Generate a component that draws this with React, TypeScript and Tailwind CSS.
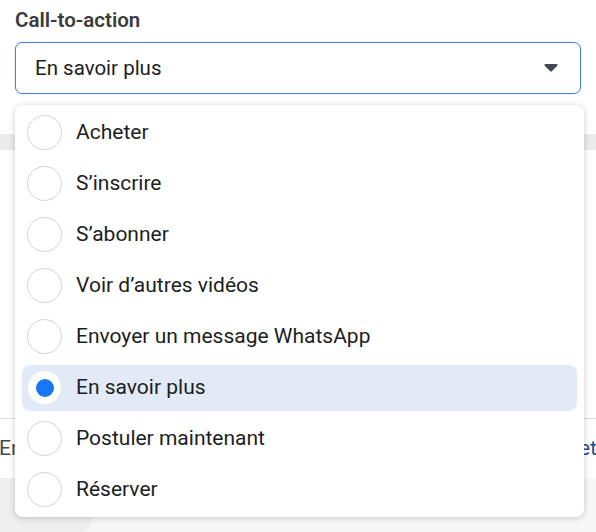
import React from 'react';

const OPTIONS = [
  'Acheter',
  'S’inscrire',
  'S’abonner',
  'Voir d’autres vidéos',
  'Envoyer un message WhatsApp',
  'En savoir plus',
  'Postuler maintenant',
  'Réserver',
];

const SELECTED = 'En savoir plus';

const Caret: React.FC = () => (
  <svg width="16" height="10" viewBox="0 0 16 10" aria-hidden="true">
    <path d="M2.5 2 H13.5 L8 7.5 Z" fill="#444950" stroke="#444950" strokeWidth="2.2" strokeLinejoin="round" />
  </svg>
);

const App: React.FC = () => {
  return (
    <div
      className="relative h-[532px] w-[596px] overflow-hidden bg-white"
      style={{ fontFamily: 'Roboto, "Liberation Sans", sans-serif' }}
    >
      {/* page behind the menu */}
      <div className="flex h-full flex-col">
        <div className="px-[15px] pt-[7px]">
          <p className="text-[20.5px] font-semibold leading-[26px] text-[#3a3b3c]">Call-to-action</p>
          <div className="mt-[9px] flex h-[52px] items-center justify-between rounded-[7px] border border-[#4a7fd0] bg-white pl-[19px] pr-[21px] shadow-[0_0_0_1px_rgba(24,119,242,0.08)]">
            <span className="text-[20.5px] text-[#1c1e21]">{SELECTED}</span>
            <Caret />
          </div>
        </div>
        <div className="h-[40px] shrink-0" />
        <div className="h-[16px] shrink-0 bg-[#ebebeb]" />
        <div className="h-[268px] shrink-0" />
        <div className="flex h-[60px] shrink-0 items-center justify-between border-t border-[#dcdcdc] text-[21px]">
          <span className="-ml-[1px] text-[#444950]">En</span>
          <span className="-mr-[1px] text-[#2d4c8a]">Modifier le projet</span>
        </div>
        <div className="flex flex-1 bg-[#f7f7f7]">
          <div className="w-[92px] rounded-br-[14px] bg-[#eeeeee]" />
        </div>
      </div>

      {/* open menu */}
      <div className="absolute left-[15px] top-[105px] w-[569px] rounded-[8px] bg-white py-[2px] shadow-[0_1px_6px_rgba(0,0,0,0.2)]">
        {OPTIONS.map((label) => {
          const selected = label === SELECTED;
          return (
            <div key={label} className="px-[7px] py-[2.5px]">
              <div
                className={`flex h-[46px] items-center gap-[14px] rounded-[8px] pl-[5px] ${
                  selected ? 'bg-[#e2eaf8]' : ''
                }`}
              >
                <span
                  className={`flex h-[35px] w-[35px] shrink-0 items-center justify-center rounded-full border bg-white ${
                    selected ? 'border-[#e6ebf3]' : 'border-[#d4d4d4]'
                  }`}
                >
                  {selected && <span className="h-[18px] w-[18px] rounded-full bg-[#1877f2]" />}
                </span>
                <span className="text-[21px] text-[#1c1e21]">{label}</span>
              </div>
            </div>
          );
        })}
      </div>
    </div>
  );
};

export default App;
